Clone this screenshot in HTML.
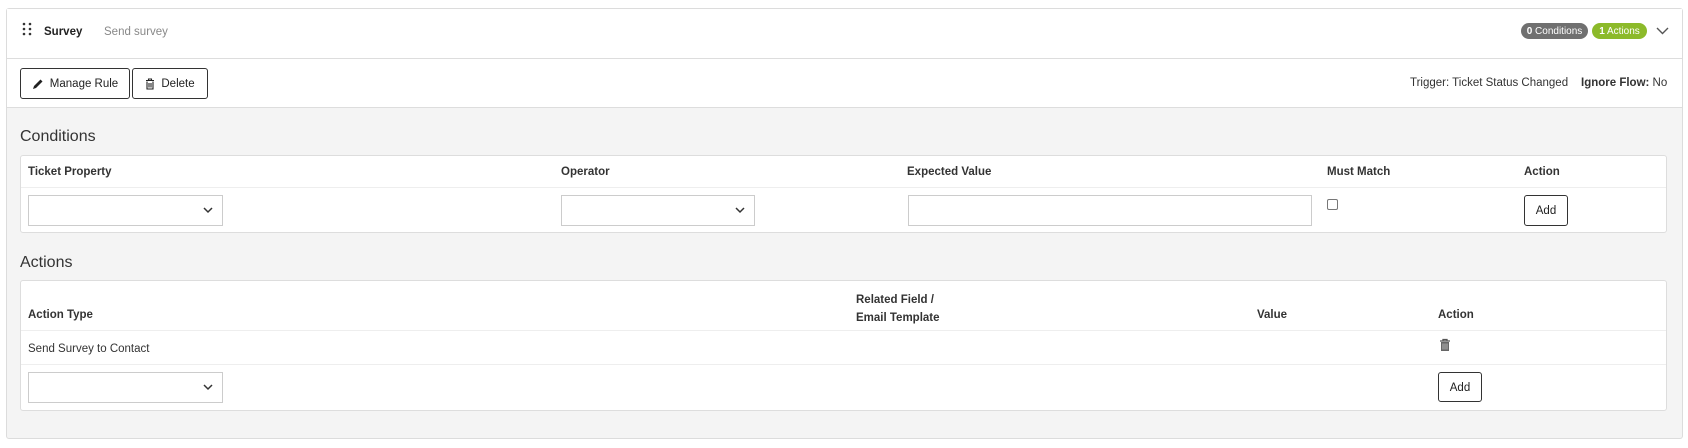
<!DOCTYPE html>
<html><head><meta charset="utf-8"><style>
*{box-sizing:border-box;margin:0;padding:0}
body{width:1688px;height:448px;background:#fff;font-family:"Liberation Sans",sans-serif;color:#222;position:relative;overflow:hidden}
.a{position:absolute}
.t{font-size:11.5px;white-space:nowrap;margin-top:2px}
.b{font-weight:bold;font-size:11.5px;white-space:nowrap;color:#333;margin-top:2px}
.sel{position:absolute;border:1px solid #ccc;background:#fff;height:31px}
.sel svg{position:absolute;right:9px;top:11px}
.btn{position:absolute;border:1px solid #333;border-radius:3px;background:#fff;font-size:11.5px;display:flex;align-items:center;justify-content:center;padding-top:1px}
</style></head><body>
<div class="a" style="left:6px;top:8px;width:1677px;height:431px;border:1px solid #dcdcdc;border-radius:3px;background:#f4f4f4"></div>
<div class="a" style="left:7px;top:9px;width:1675px;height:99px;background:#fff;border-bottom:1px solid #ddd"></div>
<div class="a" style="left:7px;top:58px;width:1675px;height:1px;background:#ddd"></div>
<svg class="a" style="left:22px;top:22px" width="10" height="14"><g fill="#333"><circle cx="2" cy="2" r="1.3"/><circle cx="8" cy="2" r="1.3"/><circle cx="2" cy="7" r="1.3"/><circle cx="8" cy="7" r="1.3"/><circle cx="2" cy="12" r="1.3"/><circle cx="8" cy="12" r="1.3"/></g></svg>
<div class="a b" style="left:44px;top:24px;color:#222">Survey</div>
<div class="a t" style="left:104px;top:24px;color:#888">Send survey</div>
<div class="a" style="left:1521px;top:23px;width:67px;height:16px;border-radius:8px;background:#707070;color:#fff;font-size:10px;line-height:17px;text-align:center"><b>0</b> Conditions</div>
<div class="a" style="left:1592px;top:23px;width:55px;height:16px;border-radius:8px;background:#8cba2a;color:#fff;font-size:10px;line-height:17px;text-align:center"><b>1</b> Actions</div>
<svg class="a" style="left:1656px;top:27px" width="13" height="8"><path d="M1 1 L6.5 6.5 L12 1" fill="none" stroke="#555" stroke-width="1.4"/></svg>
<div class="btn" style="left:20px;top:68px;width:110px;height:31px"><svg width="12" height="12" style="margin-right:6px"><path d="M1 11 L2 8 L8.5 1.5 L10.5 3.5 L4 10 Z" fill="#222"/></svg>Manage Rule</div>
<div class="btn" style="left:132px;top:68px;width:76px;height:31px"><svg width="10" height="12" style="margin-right:6px"><path d="M1 2.5H9M3.5 2.5V1H6.5V2.5M2 3.5V11H8V3.5M4 5V9.5M6 5V9.5" fill="none" stroke="#222" stroke-width="1.1"/></svg>Delete</div>
<div class="a t" style="left:1410px;top:75px;color:#333">Trigger: Ticket Status Changed</div>
<div class="a t" style="left:1581px;top:75px;color:#333"><b>Ignore Flow:</b> No</div>
<div class="a" style="left:20px;top:128px;font-size:16px;color:#333">Conditions</div>
<div class="a" style="left:20px;top:155px;width:1647px;height:78px;border:1px solid #ddd;border-radius:3px;background:#fff"></div>
<div class="a" style="left:21px;top:187px;width:1645px;height:1px;background:#eee"></div>
<div class="a b" style="left:28px;top:164px">Ticket Property</div>
<div class="a b" style="left:561px;top:164px">Operator</div>
<div class="a b" style="left:907px;top:164px">Expected Value</div>
<div class="a b" style="left:1327px;top:164px">Must Match</div>
<div class="a b" style="left:1524px;top:164px">Action</div>
<div class="sel" style="left:28px;top:195px;width:195px"><svg width="10" height="7"><path d="M1 1L5 5L9 1" fill="none" stroke="#333" stroke-width="1.5"/></svg></div>
<div class="sel" style="left:561px;top:195px;width:194px"><svg width="10" height="7"><path d="M1 1L5 5L9 1" fill="none" stroke="#333" stroke-width="1.5"/></svg></div>
<div class="a" style="left:908px;top:195px;width:404px;height:31px;border:1px solid #ccc"></div>
<div class="a" style="left:1327px;top:199px;width:11px;height:11px;border:1px solid #777;border-radius:2px"></div>
<div class="btn" style="left:1524px;top:195px;width:44px;height:31px">Add</div>
<div class="a" style="left:20px;top:254px;font-size:16px;color:#333">Actions</div>
<div class="a" style="left:20px;top:280px;width:1647px;height:131px;border:1px solid #ddd;border-radius:3px;background:#fff"></div>
<div class="a" style="left:21px;top:330px;width:1645px;height:1px;background:#eee"></div>
<div class="a" style="left:21px;top:364px;width:1645px;height:1px;background:#eee"></div>
<div class="a b" style="left:28px;top:307px">Action Type</div>
<div class="a b" style="left:856px;top:289px;line-height:18px">Related Field /<br>Email Template</div>
<div class="a b" style="left:1257px;top:307px">Value</div>
<div class="a b" style="left:1438px;top:307px">Action</div>
<div class="a t" style="left:28px;top:341px;color:#333">Send Survey to Contact</div>
<svg class="a" style="left:1439px;top:338px" width="12" height="14"><path d="M1 3H11M4 3V1.5H8V3" fill="none" stroke="#555" stroke-width="1.3"/><path d="M2 4H10V13H2Z" fill="#666"/><path d="M4 5.5V11.5M6 5.5V11.5M8 5.5V11.5" stroke="#ccc" stroke-width="0.8"/></svg>
<div class="sel" style="left:28px;top:372px;width:195px"><svg width="10" height="7"><path d="M1 1L5 5L9 1" fill="none" stroke="#333" stroke-width="1.5"/></svg></div>
<div class="btn" style="left:1438px;top:372px;width:44px;height:30px">Add</div>
</body></html>
